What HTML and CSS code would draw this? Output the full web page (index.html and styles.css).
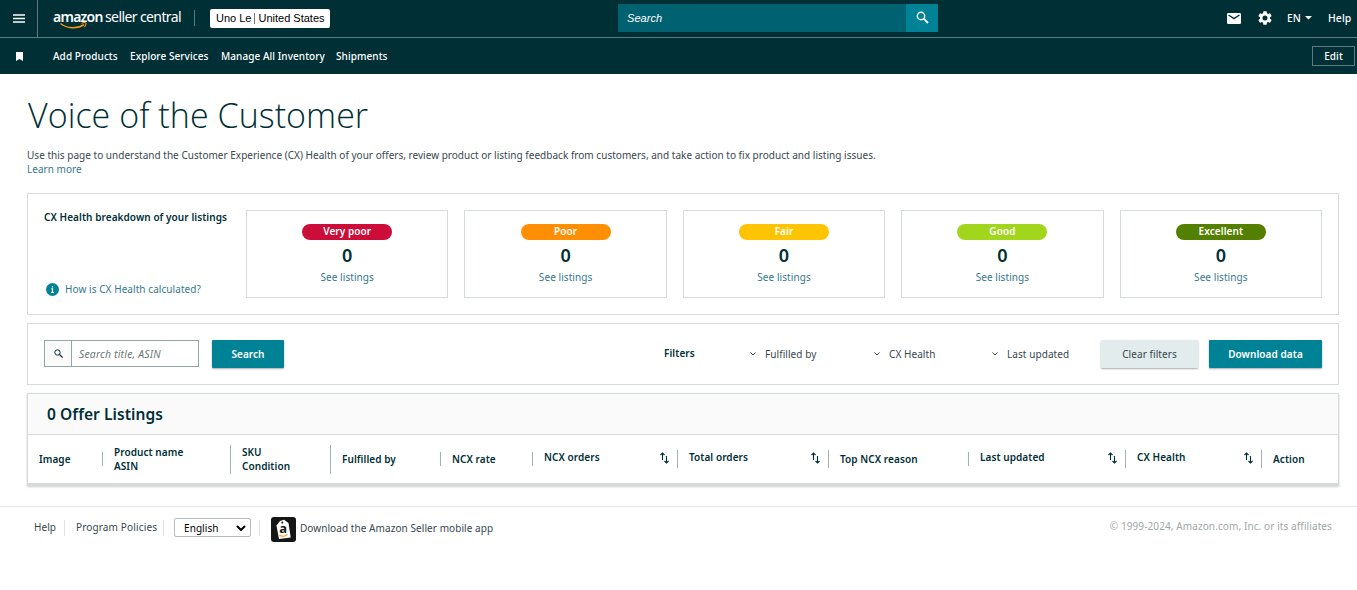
FILE: index.html
```html
<!doctype html>
<html lang="en-us">
  <head>
    <meta charset="utf-8">
    <title>Voice of the Customer</title>
    <link rel="stylesheet" href="styles.css">
  </head>
  <body>
    <header>
      <div class="topbar">
        <button class="menu" aria-label="Menu">
          <svg width="12" height="9" viewBox="0 0 12 9"><path d="M0 1h12M0 4.5h12M0 8h12" stroke="#fff" stroke-width="1.3"/></svg>
        </button>
        <div class="logo">
          <span class="amazon">amazon</span><span class="central">seller central</span>
          <svg class="smile" width="28" height="8" viewBox="0 0 28 8" fill="none" stroke="#f90">
            <path d="M0.5 1.5C7 6.6 17 7.3 24 2.6" stroke-width="1.5"/>
            <path d="M21.5 1.2c2-.7 4-.6 4.3-.2s-.2 2.5-1.3 4" stroke-width="1.1"/>
          </svg>
        </div>
        <div class="account"><b>Uno Le</b> <i></i> United States</div>
        <div class="search">
          <span>Search</span>
          <button aria-label="Search">
            <svg width="14" height="14" viewBox="0 0 14 14" fill="none" stroke="#fff"><circle cx="5" cy="5" r="3.7" stroke-width="1.4"/><path d="M7.700 7.700l4.300 4.300" stroke-width="1.800"/></svg>
          </button>
        </div>
        <div class="tools">
          <svg class="mail" width="14" height="11" viewBox="0 0 14 11"><rect width="14" height="11" rx="1.2" fill="#fff"/><path d="M1.5 2l5.5 3.600L12.500 2" fill="none" stroke="#002f36" stroke-width="1.3"/></svg>
          <svg class="gear" width="14" height="14" viewBox="2 2 20 20"><path fill="#fff" d="M19.140 12.940c.04-.3.060-.61.060-.94s-.02-.64-.07-.94l2.030-1.580a.49.490 0 0 0 .12-.61l-1.920-3.320a.49.490 0 0 0-.59-.22l-2.390.96a7 7 0 0 0-1.620-.94l-.36-2.540a.48.480 0 0 0-.48-.41h-3.840a.47.470 0 0 0-.47.410l-.36 2.540c-.59.240-1.130.57-1.620.94l-2.390-.96a.48.480 0 0 0-.59.220L2.740 8.870a.47.470 0 0 0 .12.610l2.030 1.580c-.05.300-.09.630-.09.940s.02.640.07.940l-2.030 1.580a.49.490 0 0 0-.12.610l1.920 3.320c.12.220.37.290.59.220l2.390-.96c.5.380 1.030.700 1.620.940l.36 2.540c.05.240.24.410.48.410h3.840c.24 0 .44-.17.470-.41l.36-2.540a7 7 0 0 0 1.620-.94l2.390.96c.22.080.47 0 .59-.22l1.920-3.320a.47.470 0 0 0-.12-.61zM12 15.600a3.600 3.600 0 1 1 0-7.200 3.600 3.600 0 0 1 0 7.200z"/></svg>
          <span class="lang">EN</span>
          <svg class="caret" width="7" height="4" viewBox="0 0 7 4"><path d="M0 0h7L3.5 3.6z" fill="#fff"/></svg>
          <span class="help">Help</span>
        </div>
      </div>
      <nav>
        <svg class="bookmark" width="7" height="9" viewBox="0 0 7 9"><path d="M0 0h7v9L3.5 7 0 9z" fill="#fff"/></svg>
        <a class="n1">Add Products</a>
        <a class="n2">Explore Services</a>
        <a class="n3">Manage All Inventory</a>
        <a class="n4">Shipments</a>
        <button class="edit">Edit</button>
      </nav>
    </header>

    <main>
      <h1>Voice of the Customer</h1>
      <p class="intro">Use this page to understand the Customer Experience (CX) Health of your offers, review product or listing feedback from customers, and take action to fix product and listing issues.<br><a>Learn more</a></p>

      <section class="panel health">
        <div class="about">
          <b>CX Health breakdown of your listings</b>
          <a>
            <svg width="13" height="13" viewBox="0 0 13 13"><circle cx="6.5" cy="6.5" r="6.5" fill="#008296"/><path d="M6.5 3v1.5M5.3 5.8h1.2v3.4M5 9.5h3" fill="none" stroke="#fff" stroke-width="1.2"/></svg>
            <span>How is CX Health calculated?</span>
          </a>
        </div>
        <div class="card"><span class="pill very-poor">Very poor</span><strong>0</strong><a>See listings</a></div>
        <div class="card"><span class="pill poor">Poor</span><strong>0</strong><a>See listings</a></div>
        <div class="card"><span class="pill fair">Fair</span><strong>0</strong><a>See listings</a></div>
        <div class="card"><span class="pill good">Good</span><strong>0</strong><a>See listings</a></div>
        <div class="card"><span class="pill excellent">Excellent</span><strong>0</strong><a>See listings</a></div>
      </section>

      <section class="panel filters">
        <div class="field">
          <span class="glass"><svg width="10" height="10" viewBox="0 0 10 10" fill="none" stroke="#002f36"><circle cx="3.5" cy="3.5" r="2.7" stroke-width="1"/><path d="M5.5 5.5l3.200 3.200" stroke-width="1.2"/></svg></span>
          <em>Search title, ASIN</em>
        </div>
        <button class="btn go">Search</button>
        <b>Filters</b>
        <span class="drop fulfilled"><svg width="6" height="4" viewBox="0 0 6 4"><path d="M.5.5L3 3 5.5.5" fill="none" stroke="#37474f"/></svg>Fulfilled by</span>
        <span class="drop cx"><svg width="6" height="4" viewBox="0 0 6 4"><path d="M.5.5L3 3 5.5.5" fill="none" stroke="#37474f"/></svg>CX Health</span>
        <span class="drop updated"><svg width="6" height="4" viewBox="0 0 6 4"><path d="M.5.5L3 3 5.5.5" fill="none" stroke="#37474f"/></svg>Last updated</span>
        <button class="btn clear">Clear filters</button>
        <button class="btn download">Download data</button>
      </section>

      <section class="listings">
        <h2>0 Offer Listings</h2>
        <div class="columns">
          <div>Image</div>
          <div class="double">Product name<br>ASIN</div>
          <div class="double">SKU<br>Condition</div>
          <div>Fulfilled by</div>
          <div>NCX rate</div>
          <div class="sort">NCX orders <svg width="10" height="12" viewBox="0 0 10 12"><use href="#sort"/></svg></div>
          <div class="sort">Total orders <svg width="10" height="12" viewBox="0 0 10 12"><use href="#sort"/></svg></div>
          <div>Top NCX reason</div>
          <div class="sort">Last updated <svg width="10" height="12" viewBox="0 0 10 12"><use href="#sort"/></svg></div>
          <div class="sort">CX Health <svg width="10" height="12" viewBox="0 0 10 12"><use href="#sort"/></svg></div>
          <div>Action</div>
        </div>
      </section>
    </main>

    <footer>
      <a class="f-help">Help</a>
      <a class="f-policies">Program Policies</a>
      <div class="f-lang">
        <span class="select">English<svg width="10" height="6" viewBox="0 0 10 6"><path d="M1 1l4 4 4-4" fill="none" stroke="#000" stroke-width="2"/></svg></span>
      </div>
      <a class="f-app">
        <svg width="25" height="25" viewBox="0 0 25 25">
          <rect width="25" height="25" rx="3" fill="#151515"/>
          <path d="M5.500 8.500L9 4l4-1.200L17.500 6l2.200 14.500L8 22z" fill="#fff"/>
          <circle cx="11.300" cy="5.500" r="1" fill="#151515"/>
          <text x="8.200" y="16" class="tag-letter">a</text>
          <path d="M8.500 18.200c2.500 1.500 6 1.100 8-.8" fill="none" stroke="#f90" stroke-width="1.2"/>
        </svg>
        <span>Download the Amazon Seller mobile app</span>
      </a>
      <span class="copy">© 1999-2024, Amazon.com, Inc. or its affiliates</span>
    </footer>

    <!-- shared sort arrows -->
    <svg class="defs" width="0" height="0">
      <g id="sort" fill="none" stroke="#002f36" stroke-width="1.1"><path d="M2.500 8V1M.5 3L2.500 1 4.500 3M6.500 4v7.200M4.500 9L6.500 11 8.500 9"/></g>
    </svg>
  </body>
</html>
```

FILE: styles.css
```css
* {
    box-sizing: border-box;
}

body {
    margin: 0;
    background: #fff;
    color: #37474f;
    font: 10px/14px "Noto Sans", "Open Sans", sans-serif;
    letter-spacing: 0.07px;
}

button {
    font: inherit;
    letter-spacing: inherit;
    border: 0;
    padding: 0;
}

svg {
    display: block;
    flex: none;
}

a {
    color: #35798d;
}

header {
    height: 74px;
    background: #002f36;
    color: #fff;
}

.topbar {
    display: flex;
    align-items: center;
    height: 38px;
    border-bottom: 1px solid #5f7b7e;
}

.menu {
    width: 38px;
    height: 37px;
    padding-left: 13px;
    background: none;
    border-right: 1px solid #5f7b7e;
}

.logo {
    position: relative;
    display: flex;
    width: 157px;
    height: 16px;
    margin-top: -2px;
    padding-left: 15px;
    border-right: 1px solid #5f7b7e;
    font-size: 14px;
    line-height: 14px;
    white-space: nowrap;
}

.amazon {
    width: 52px;
    font-weight: 600;
    letter-spacing: -0.75px;
}

.central {
    letter-spacing: -0.6px;
}

.smile {
    position: absolute;
    left: 22px;
    top: 12px;
}

.account {
    display: flex;
    align-items: center;
    gap: 3px;
    width: 120px;
    height: 19px;
    margin-left: 15px;
    padding-left: 6px;
    background: #fff;
    border-radius: 2px;
    color: #000;
    font: 11px/19px "Liberation Sans", sans-serif;
    letter-spacing: 0;
    white-space: nowrap;
}

.account b {
    font-weight: 500;
}

.account i {
    width: 1px;
    height: 11px;
    background: #777;
}

.search {
    display: flex;
    width: 320px;
    height: 28px;
    margin-top: -1px;
    margin-left: 288px;
    background: #006170;
    font: italic 11px/28px "Liberation Sans", sans-serif;
}

.search span {
    flex: 1;
    padding-left: 9px;
}

.search button {
    width: 32px;
    padding-left: 10px;
    background: #008296;
}

.tools {
    display: flex;
    align-items: center;
    margin-top: -1px;
    margin-left: 289px;
    font-size: 10.4px;
    font-weight: 500;
}

.gear {
    margin-left: 17px;
}

.lang {
    width: 15px;
    margin-left: 15px;
}

.caret {
    margin-left: 3px;
}

.help {
    margin-left: 16px;
}

nav {
    display: flex;
    align-items: center;
    height: 36px;
    padding: 0 2px 0 16px;
    white-space: nowrap;
}

nav a {
    color: #fff;
    font-weight: 500;
}

.n1 {
    width: 77px;
    margin-left: 30px;
}

.n2 {
    width: 91px;
}

.n3 {
    width: 115px;
}

.edit {
    width: 43px;
    height: 20px;
    margin-left: auto;
    background: none;
    border: 1px solid #5f7b7e;
    color: #fff;
    font-weight: 500;
}

main {
    padding: 0 18px 0 27px;
}

h1 {
    margin: 0;
    padding: 21px 0 0 1px;
    color: #002f36;
    font: 300 34px/40px "Open Sans", sans-serif;
    letter-spacing: 0.05px;
}

.intro {
    margin: 13px 0 17px;
    letter-spacing: 0.02px;
    white-space: nowrap;
}

.panel {
    display: flex;
    border: 1px solid #d5dbdb;
}

.health {
    height: 122px;
    gap: 16px;
    padding: 16px;
}

.about {
    display: flex;
    flex-direction: column;
    justify-content: space-between;
    width: 186px;
    color: #002f36;
    white-space: nowrap;
}

.about a {
    display: flex;
    align-items: center;
    gap: 6px;
    margin-left: 2px;
    margin-bottom: 2px;
}

b {
    font-weight: 600;
}

.card {
    display: flex;
    flex: 1;
    flex-direction: column;
    align-items: center;
    height: 88px;
    padding-top: 13px;
    border: 1px solid #d5dbdb;
}

.card strong {
    margin: 4px 0;
    color: #002f36;
    font-size: 18px;
    font-weight: 600;
    line-height: 22px;
}

.pill {
    width: 90px;
    height: 16px;
    border-radius: 8px;
    color: #fff;
    font-weight: 600;
    line-height: 15px;
    text-align: center;
}

.very-poor {
    background: #cc0c39;
}

.poor {
    background: #ff8f00;
}

.fair {
    background: #ffc400;
}

.good {
    background: #a2d61c;
}

.excellent {
    background: #538000;
}

.filters {
    align-items: flex-start;
    height: 62px;
    margin-top: 8px;
    padding: 16px;
    white-space: nowrap;
}

.field {
    display: flex;
    width: 155px;
    height: 27px;
    border: 1px solid #95a5a6;
    line-height: 27px;
}

.field em {
    padding-left: 7px;
    color: #6c7778;
    font-size: 10.4px;
    letter-spacing: 0.2px;
}

.glass {
    width: 27px;
    padding: 8px 0 0 9px;
    background: #fafafa;
    border-right: 1px solid #95a5a6;
}

.btn {
    height: 28px;
    background: #008296;
    border-radius: 1px;
    box-shadow: 0 1px 2px #0005;
    color: #fff;
    font-weight: 600;
}

.go {
    width: 72px;
    margin-left: 13px;
}

.filters > b {
    width: 86px;
    margin: 6px 0 0 380px;
    color: #002f36;
}

.drop {
    display: flex;
    align-items: center;
    gap: 9px;
    margin-top: 7px;
}

.fulfilled {
    width: 124px;
}

.cx {
    width: 118px;
}

.updated {
    width: 109px;
}

.clear {
    width: 97px;
    background: #e3eced;
    color: #37474f;
    font-weight: 400;
}

.download {
    width: 113px;
    margin-left: auto;
}

.listings {
    height: 93px;
    margin-top: 8px;
    border: 1px solid #d5dbdb;
    border-bottom-width: 3px;
    box-shadow: 0 1px 2px #0003;
}

h2 {
    height: 41px;
    margin: 0;
    padding-left: 19px;
    background: #fafafa;
    border-bottom: 1px solid #d5dbdb;
    color: #002f36;
    font-size: 15.5px;
    font-weight: 600;
    line-height: 41px;
}

.columns {
    display: grid;
    grid-template-columns: 75px 128px 100px 110px 92px 145px 151px 140px 157px 136px 1fr;
    align-items: center;
    height: 48px;
    color: #002f36;
    font-weight: 600;
    white-space: nowrap;
}

.columns div {
    height: 14px;
    padding-left: 11px;
    border-right: 1px solid #a2b1b3;
}

.columns .double {
    height: 29px;
}

.columns .sort {
    display: flex;
    justify-content: space-between;
    height: 18px;
    padding-right: 7px;
}

.sort svg {
    margin-top: 2px;
}

.columns div:last-child {
    border: 0;
}

footer {
    display: flex;
    align-items: center;
    height: 42px;
    margin-top: 20px;
    padding-left: 34px;
    border-top: 1px solid #e4e7e7;
    white-space: nowrap;
}

footer a {
    color: #37474f;
}

.f-help,
.f-policies,
.f-lang {
    height: 16px;
    border-right: 1px solid #e0e3e3;
}

.f-help {
    width: 31px;
}

.f-policies {
    width: 99px;
    padding-left: 11px;
    letter-spacing: 0.15px;
}

.f-lang {
    display: flex;
    align-items: center;
    width: 96px;
    padding-left: 10px;
}

.select {
    display: flex;
    align-items: center;
    justify-content: space-between;
    width: 77px;
    height: 19px;
    padding: 0 4px 0 9px;
    border: 1px solid #b5bcbd;
    border-radius: 2px;
    color: #000;
}

.f-app {
    display: flex;
    align-items: center;
    gap: 4px;
    margin: 4px 0 0 11px;
}

.f-app span {
    margin-top: -4px;
}

.tag-letter {
    font: 700 13px "Noto Sans", sans-serif;
    fill: #151515;
}

.copy {
    margin: -4px 25px 0 auto;
    color: #a0a7a8;
    letter-spacing: 0.1px;
}

.defs {
    position: absolute;
}
```
